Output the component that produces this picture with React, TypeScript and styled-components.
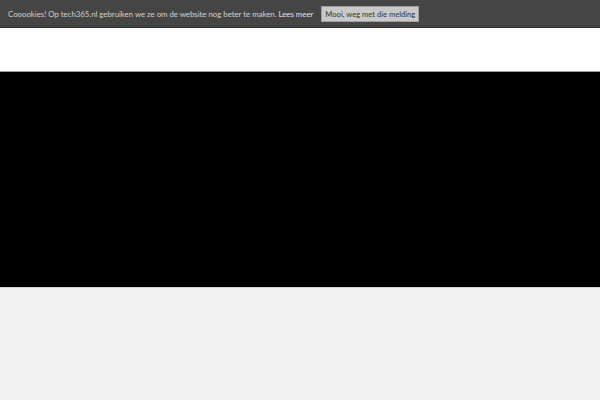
import React from "react";
import styled, { createGlobalStyle } from "styled-components";

const GlobalStyle = createGlobalStyle`
  html, body {
    margin: 0;
    padding: 0;
    background: #f2f2f2;
    font-family: Lato, "Open Sans", sans-serif;
  }
`;

const CookieBar = styled.div`
  height: 28px;
  background: #454545;
  border-bottom: 1px solid #2e2e2e;
  display: flex;
  align-items: center;
  padding: 0 0 0 8px;
  gap: 8px;
  font-size: 7.8px;
  color: #d2d2d2;
  box-sizing: border-box;
`;

const Message = styled.span`
  white-space: nowrap;
`;

const MoreLink = styled.a`
  color: #e2e2e2;
  text-decoration: none;
`;

const DismissButton = styled.button`
  height: 16px;
  padding: 0 3px;
  background: #c9c9c9;
  border: 1px solid #a0a0a0;
  border-radius: 0;
  color: #333;
  font-family: inherit;
  font-size: 7.6px;
  font-weight: 400;
  cursor: pointer;
`;

const Header = styled.div`
  height: 43px;
  background: #ffffff;
`;

const Hero = styled.div`
  height: 215px;
  background: #000;
  border-top: 1px solid #9c9c9c;
`;

const Body = styled.div`
  height: 113px;
  background: #f2f2f2;
  border-top: 1px solid #d4d4d4;
`;

export default function App() {
  return (
    <>
      <GlobalStyle />
      <CookieBar>
        <Message>
          Cooookies! Op tech365.nl gebruiken we ze om de website nog beter te maken.{" "}
          <MoreLink href="#">Lees meer</MoreLink>
        </Message>
        <DismissButton>Mooi, weg met die melding</DismissButton>
      </CookieBar>
      <Header />
      <Hero />
      <Body />
    </>
  );
}
